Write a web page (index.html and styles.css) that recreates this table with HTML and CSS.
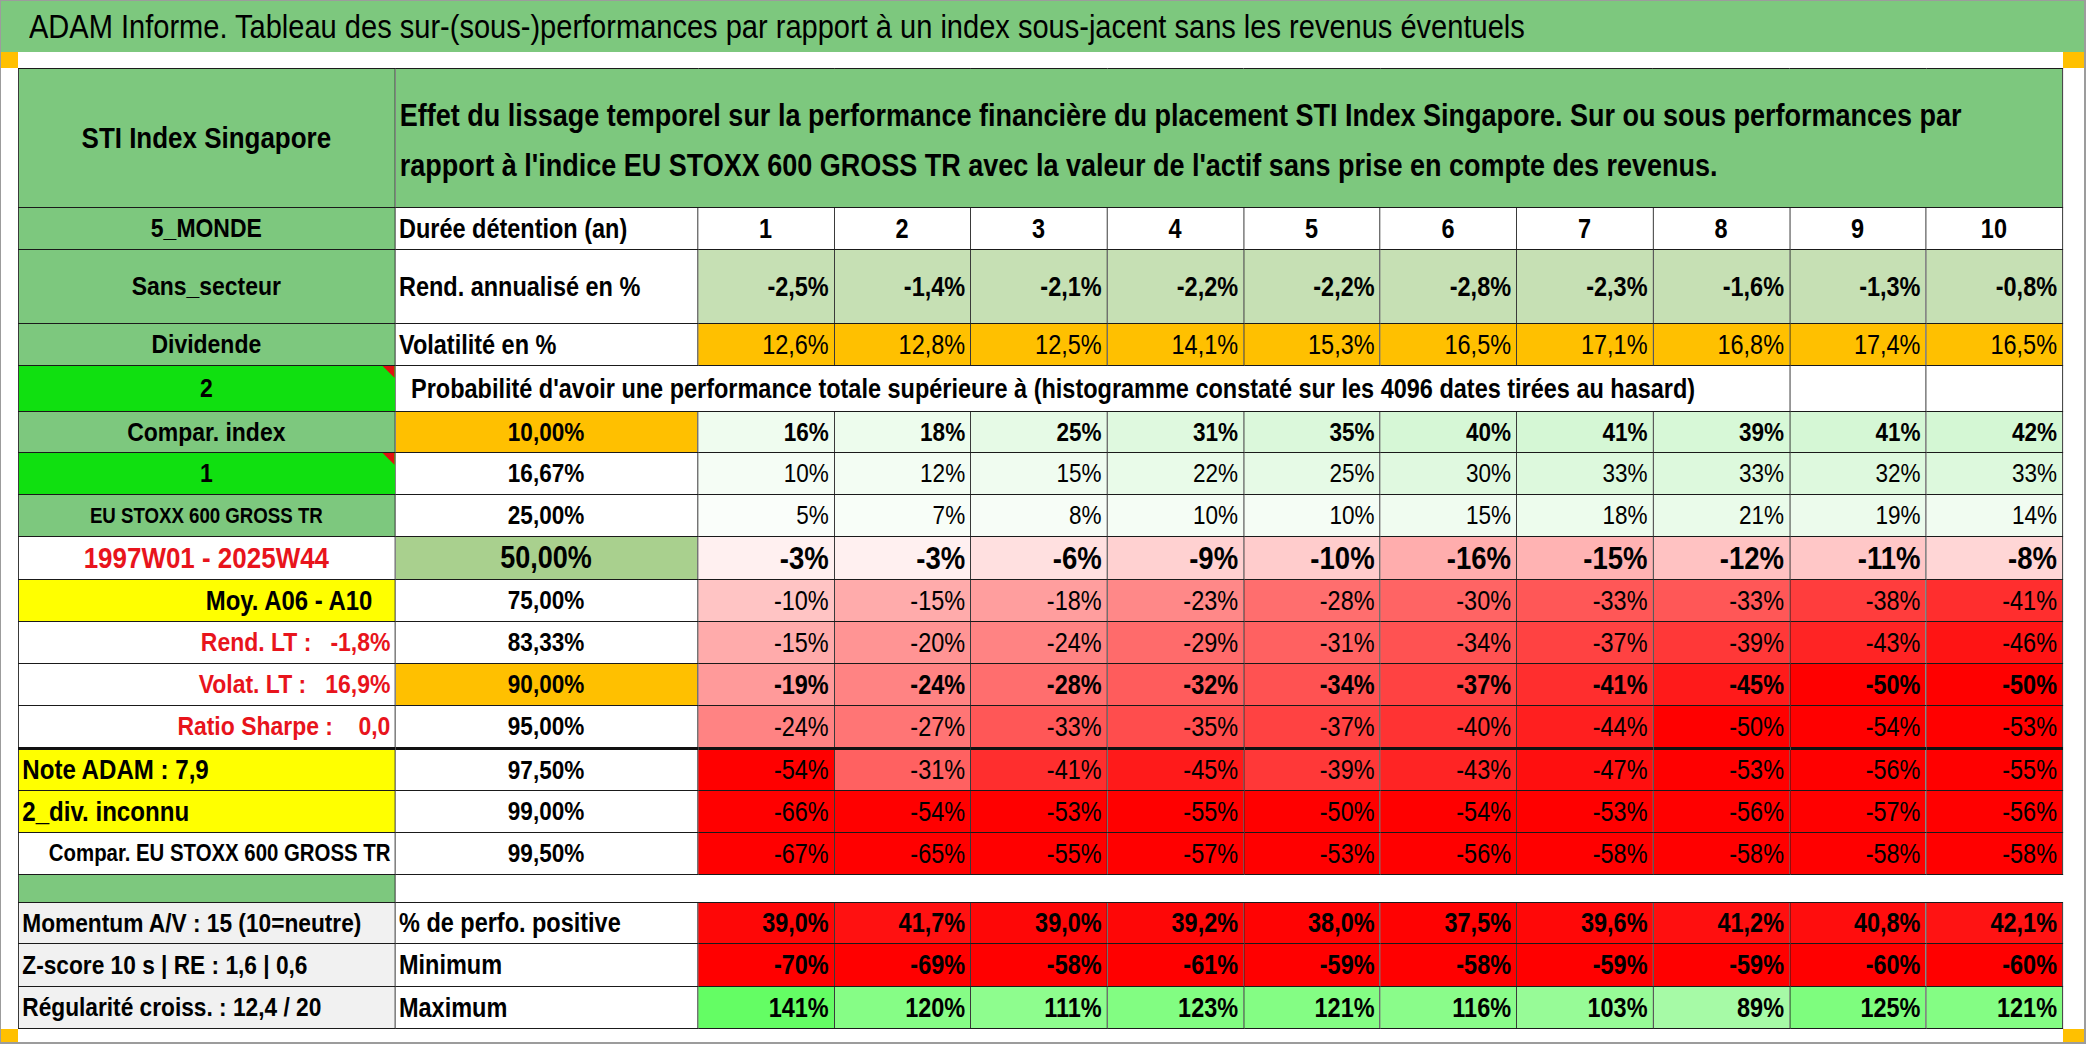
FILE: index.html
```html
<!DOCTYPE html>
<html lang="fr">
<head>
<meta charset="utf-8">
<title>ADAM Informe</title>
<link rel="stylesheet" href="styles.css">
</head>
<body>
<div class="page">
  <div class="title"><span class="title-text">ADAM Informe. Tableau des sur-(sous-)performances par rapport à un index sous-jacent sans les revenus éventuels</span></div>
  <div class="sheet">
    <span class="handle tl"></span><span class="handle tr"></span><span class="handle bl"></span><span class="handle br"></span>
    <table class="grid">
      <colgroup><col class="c1"><col class="c2"><col span="10" class="cn"></colgroup>
      <tbody>
        <tr class="r-head">
          <td class="g lbl big">STI Index Singapore</td>
          <td class="g desc" colspan="11">Effet du lissage temporel sur la performance financière du placement STI Index Singapore. Sur ou sous performances par<br>rapport à l'indice EU STOXX 600 GROSS TR avec la valeur de l'actif sans prise en compte des revenus.</td>
        </tr>
        <tr class="r42">
          <td class="g lbl">5_MONDE</td>
          <td class="t2">Durée détention (an)</td>
          <td class="hn">1</td><td class="hn">2</td><td class="hn">3</td><td class="hn">4</td><td class="hn">5</td><td class="hn">6</td><td class="hn">7</td><td class="hn">8</td><td class="hn">9</td><td class="hn">10</td>
        </tr>
        <tr class="r74">
          <td class="g lbl">Sans_secteur</td>
          <td class="t2">Rend. annualisé en %</td>
          <td class="n b lg">-2,5%</td><td class="n b lg">-1,4%</td><td class="n b lg">-2,1%</td><td class="n b lg">-2,2%</td><td class="n b lg">-2,2%</td><td class="n b lg">-2,8%</td><td class="n b lg">-2,3%</td><td class="n b lg">-1,6%</td><td class="n b lg">-1,3%</td><td class="n b lg">-0,8%</td>
        </tr>
        <tr class="r42">
          <td class="g lbl">Dividende</td>
          <td class="t2">Volatilité en %</td>
          <td class="n or">12,6%</td><td class="n or">12,8%</td><td class="n or">12,5%</td><td class="n or">14,1%</td><td class="n or">15,3%</td><td class="n or">16,5%</td><td class="n or">17,1%</td><td class="n or">16,8%</td><td class="n or">17,4%</td><td class="n or">16,5%</td>
        </tr>
        <tr class="r46">
          <td class="bg lbl note">2<span class="tri"></span></td>
          <td class="t2 prob" colspan="9">Probabilité d'avoir une performance totale supérieure à (histogramme constaté sur les 4096 dates tirées au hasard)</td>
          <td></td><td></td>
        </tr>
        <tr class="r41">
          <td class="g lbl">Compar. index</td>
          <td class="p or">10,00%</td>
          <td class="n b sm" style="background:#effcef">16%</td><td class="n b sm" style="background:#edfced">18%</td><td class="n b sm" style="background:#e6fae6">25%</td><td class="n b sm" style="background:#dff9df">31%</td><td class="n b sm" style="background:#dbf8db">35%</td><td class="n b sm" style="background:#d6f7d6">40%</td><td class="n b sm" style="background:#d5f7d5">41%</td><td class="n b sm" style="background:#d7f8d7">39%</td><td class="n b sm" style="background:#d5f7d5">41%</td><td class="n b sm" style="background:#d4f7d4">42%</td>
        </tr>
        <tr class="r42">
          <td class="bg lbl note">1<span class="tri"></span></td>
          <td class="p">16,67%</td>
          <td class="n sm" style="background:#f5fdf5">10%</td><td class="n sm" style="background:#f3fdf3">12%</td><td class="n sm" style="background:#f0fcf0">15%</td><td class="n sm" style="background:#e9fbe9">22%</td><td class="n sm" style="background:#e6fae6">25%</td><td class="n sm" style="background:#e0f9e0">30%</td><td class="n sm" style="background:#ddf9dd">33%</td><td class="n sm" style="background:#ddf9dd">33%</td><td class="n sm" style="background:#def9de">32%</td><td class="n sm" style="background:#ddf9dd">33%</td>
        </tr>
        <tr class="r42">
          <td class="g lbl small">EU STOXX 600 GROSS TR</td>
          <td class="p">25,00%</td>
          <td class="n sm" style="background:#fafefa">5%</td><td class="n sm" style="background:#f8fef8">7%</td><td class="n sm" style="background:#f7fdf7">8%</td><td class="n sm" style="background:#f5fdf5">10%</td><td class="n sm" style="background:#f5fdf5">10%</td><td class="n sm" style="background:#f0fcf0">15%</td><td class="n sm" style="background:#edfced">18%</td><td class="n sm" style="background:#eafbea">21%</td><td class="n sm" style="background:#ecfbec">19%</td><td class="n sm" style="background:#f1fcf1">14%</td>
        </tr>
        <tr class="r43">
          <td class="lbl red big">1997W01 - 2025W44</td>
          <td class="p med big2">50,00%</td>
          <td class="n b big2" style="background:#fff0f0">-3%</td><td class="n b big2" style="background:#fff0f0">-3%</td><td class="n b big2" style="background:#ffe0e0">-6%</td><td class="n b big2" style="background:#ffd1d1">-9%</td><td class="n b big2" style="background:#ffcccc">-10%</td><td class="n b big2" style="background:#ffadad">-16%</td><td class="n b big2" style="background:#ffb3b3">-15%</td><td class="n b big2" style="background:#ffc2c2">-12%</td><td class="n b big2" style="background:#ffc7c7">-11%</td><td class="n b big2" style="background:#ffd6d6">-8%</td>
        </tr>
        <tr class="r42">
          <td class="y lbl right moy">Moy. A06 - A10</td>
          <td class="p">75,00%</td>
          <td class="n" style="background:#ffc4c4">-10%</td><td class="n" style="background:#ffabab">-15%</td><td class="n" style="background:#ff9e9e">-18%</td><td class="n" style="background:#ff8888">-23%</td><td class="n" style="background:#ff6e6e">-28%</td><td class="n" style="background:#ff6464">-30%</td><td class="n" style="background:#ff5757">-33%</td><td class="n" style="background:#ff5757">-33%</td><td class="n" style="background:#ff3d3d">-38%</td><td class="n" style="background:#ff2e2e">-41%</td>
        </tr>
        <tr class="r42">
          <td class="lbl red right">Rend. LT :   -1,8%</td>
          <td class="p">83,33%</td>
          <td class="n" style="background:#ffabab">-15%</td><td class="n" style="background:#ff9494">-20%</td><td class="n" style="background:#ff8383">-24%</td><td class="n" style="background:#ff6b6b">-29%</td><td class="n" style="background:#ff6161">-31%</td><td class="n" style="background:#ff5252">-34%</td><td class="n" style="background:#ff4242">-37%</td><td class="n" style="background:#ff3838">-39%</td><td class="n" style="background:#ff2424">-43%</td><td class="n" style="background:#ff1414">-46%</td>
        </tr>
        <tr class="r42">
          <td class="lbl red right">Volat. LT :   16,9%</td>
          <td class="p or">90,00%</td>
          <td class="n b" style="background:#ff9a9a">-19%</td><td class="n b" style="background:#ff8383">-24%</td><td class="n b" style="background:#ff6e6e">-28%</td><td class="n b" style="background:#ff5c5c">-32%</td><td class="n b" style="background:#ff5252">-34%</td><td class="n b" style="background:#ff4242">-37%</td><td class="n b" style="background:#ff2e2e">-41%</td><td class="n b" style="background:#ff1a1a">-45%</td><td class="n b" style="background:#ff0000">-50%</td><td class="n b" style="background:#ff0000">-50%</td>
        </tr>
        <tr class="r43 thick">
          <td class="lbl red right">Ratio Sharpe :    0,0</td>
          <td class="p">95,00%</td>
          <td class="n" style="background:#ff8383">-24%</td><td class="n" style="background:#ff7575">-27%</td><td class="n" style="background:#ff5757">-33%</td><td class="n" style="background:#ff4d4d">-35%</td><td class="n" style="background:#ff4242">-37%</td><td class="n" style="background:#ff3333">-40%</td><td class="n" style="background:#ff1f1f">-44%</td><td class="n" style="background:#ff0000">-50%</td><td class="n" style="background:#ff0000">-54%</td><td class="n" style="background:#ff0000">-53%</td>
        </tr>
        <tr class="r42">
          <td class="y lbl left">Note ADAM : 7,9</td>
          <td class="p">97,50%</td>
          <td class="n" style="background:#ff0000">-54%</td><td class="n" style="background:#ff6161">-31%</td><td class="n" style="background:#ff2e2e">-41%</td><td class="n" style="background:#ff1a1a">-45%</td><td class="n" style="background:#ff3838">-39%</td><td class="n" style="background:#ff2424">-43%</td><td class="n" style="background:#ff0f0f">-47%</td><td class="n" style="background:#ff0000">-53%</td><td class="n" style="background:#ff0000">-56%</td><td class="n" style="background:#ff0000">-55%</td>
        </tr>
        <tr class="r42">
          <td class="y lbl left">2_div. inconnu</td>
          <td class="p">99,00%</td>
          <td class="n rd">-66%</td><td class="n rd">-54%</td><td class="n rd">-53%</td><td class="n rd">-55%</td><td class="n rd">-50%</td><td class="n rd">-54%</td><td class="n rd">-53%</td><td class="n rd">-56%</td><td class="n rd">-57%</td><td class="n rd">-56%</td>
        </tr>
        <tr class="r42">
          <td class="lbl right small2">Compar. EU STOXX 600 GROSS TR</td>
          <td class="p">99,50%</td>
          <td class="n rd">-67%</td><td class="n rd">-65%</td><td class="n rd">-55%</td><td class="n rd">-57%</td><td class="n rd">-53%</td><td class="n rd">-56%</td><td class="n rd">-58%</td><td class="n rd">-58%</td><td class="n rd">-58%</td><td class="n rd">-58%</td>
        </tr>
        <tr class="r28 gap">
          <td class="g"></td>
          <td class="blank" colspan="11"></td>
        </tr>
        <tr class="r41">
          <td class="gr lbl left mini">Momentum A/V : 15 (10=neutre)</td>
          <td class="t2">% de perfo. positive</td>
          <td class="n b" style="background:#fe0707">39,0%</td><td class="n b" style="background:#ff1111">41,7%</td><td class="n b" style="background:#fe0707">39,0%</td><td class="n b" style="background:#fe0707">39,2%</td><td class="n b" style="background:#ff0303">38,0%</td><td class="n b" style="background:#ff0202">37,5%</td><td class="n b" style="background:#ff0808">39,6%</td><td class="n b" style="background:#ff0f0f">41,2%</td><td class="n b" style="background:#ff0d0d">40,8%</td><td class="n b" style="background:#ff1313">42,1%</td>
        </tr>
        <tr class="r43">
          <td class="gr lbl left mini">Z-score 10 s | RE : 1,6 | 0,6</td>
          <td class="t2">Minimum</td>
          <td class="n b rd">-70%</td><td class="n b rd">-69%</td><td class="n b rd">-58%</td><td class="n b rd">-61%</td><td class="n b rd">-59%</td><td class="n b rd">-58%</td><td class="n b rd">-59%</td><td class="n b rd">-59%</td><td class="n b rd">-60%</td><td class="n b rd">-60%</td>
        </tr>
        <tr class="r42">
          <td class="gr lbl left mini">Régularité croiss. : 12,4 / 20</td>
          <td class="t2">Maximum</td>
          <td class="n b" style="background:#64fd64">141%</td><td class="n b" style="background:#86fd86">120%</td><td class="n b" style="background:#8efd8e">111%</td><td class="n b" style="background:#82fd82">123%</td><td class="n b" style="background:#84fd84">121%</td><td class="n b" style="background:#8afc8a">116%</td><td class="n b" style="background:#97fb97">103%</td><td class="n b" style="background:#a6faa6">89%</td><td class="n b" style="background:#7efd7e">125%</td><td class="n b" style="background:#84fd84">121%</td>
        </tr>
      </tbody>
    </table>
  </div>
</div>
</body>
</html>
```

FILE: styles.css
```css
* { box-sizing: border-box; }

body {
  margin: 0;
  background: #ffffff;
}

.page {
  width: 2086px;
  height: 1044px;
  border: 1px solid #9c9c9c;
  border-width: 1px 2px 2px 1px;
  background: #ffffff;
  font-family: "Liberation Sans", Arial, sans-serif;
  color: #000;
  overflow: hidden;
}

/* The source sheet is rendered in a narrow face: emulate it by
   condensing the text horizontally. */
.title {
  height: 51px;
  background: #7dc87e;
  line-height: 51px;
  padding-left: 28px;
  white-space: nowrap;
}
.title-text {
  display: inline-block;
  font-size: 33px;
  transform: scaleX(0.88);
  transform-origin: left center;
}

.sheet {
  position: relative;
  height: 991px;
  padding: 16px 21px 14px 17px;
}

.handle {
  position: absolute;
  width: 17px;
  height: 16px;
  background: #ffc000;
}
.handle.tl { left: 0; top: 0; }
.handle.tr { right: 0; top: 0; width: 21px; }
.handle.bl { left: 0; bottom: 0; height: 14px; }
.handle.br { right: 0; bottom: 0; width: 21px; height: 14px; }

.grid {
  width: 2378px;
  table-layout: fixed;
  border-collapse: collapse;
  font-size: 27.3px;
  transform: scaleX(0.86);
  transform-origin: left top;
}

.c1 { width: 438px; }
.c2 { width: 352px; }

.grid td {
  border: 1px solid #1a1a1a;
  padding: 0 6px 0 5px;
  white-space: nowrap;
  overflow: hidden;
  vertical-align: middle;
  line-height: 1;
}

.r-head { height: 139px; }
.r74 { height: 74px; }
.r46 { height: 46px; }
.r43 { height: 43px; }
.r42 { height: 42px; }
.r41 { height: 41px; }
.r28 { height: 28px; }

.grid .thick td { border-bottom: 3px solid #111; }

/* fills */
.g { background: #7dc87e; }
.bg { background: #10e010; }
.y { background: #ffff00; }
.gr { background: #f1f1f1; }
.or { background: #ffc000; }
.lg { background: #c6e0b4; }
.med { background: #a9d08e; }
.rd { background: #ff0000; }

/* left column labels */
.grid td.lbl {
  font-weight: bold;
  font-size: 26.7px;
  text-align: center;
}
.grid td.lbl.big { font-size: 30.2px; }
.grid td.lbl.small { font-size: 21.7px; }
.grid td.lbl.small2 { font-size: 23.7px; padding-right: 9px; }
.grid td.lbl.right { text-align: right; white-space: pre; padding-right: 5px; }
.grid td.lbl.moy { padding-right: 26px; font-size: 27.8px; }
.grid td.lbl.left { text-align: left; padding-left: 4px; }
.grid td.y.lbl.left { font-size: 28px; }
.grid td.lbl.mini { font-size: 26.4px; }
.red { color: #e8141c; }

.note { position: relative; }
.tri {
  position: absolute;
  top: 0;
  right: 0;
  width: 0;
  height: 0;
  border-top: 12px solid #e01010;
  border-left: 14px solid transparent;
}

/* header */
.grid td.desc {
  font-weight: bold;
  font-size: 31.4px;
  line-height: 50px;
  padding-top: 6px;
  text-align: left;
}

.grid td.t2 {
  font-weight: bold;
  font-size: 27.3px;
  text-align: left;
  padding-left: 4px;
}
.grid td.prob { padding-left: 18px; border-right: 1px solid #1a1a1a; }

.hn {
  font-weight: bold;
  text-align: center;
}

.grid td.p {
  font-weight: bold;
  font-size: 26.2px;
  text-align: center;
}
.big2 { font-size: 32px; }
.grid td.p.big2 { font-size: 31.4px; }

.grid td.n {
  text-align: right;
  padding-right: 6px;
}
.n.b { font-weight: bold; }
.grid td.n.sm { font-size: 26.2px; }

.grid .gap td { border-top: 1px solid #1a1a1a; border-bottom: 1px solid #1a1a1a; }
.grid .gap td.blank { border-right: none; background: #fff; }
```
